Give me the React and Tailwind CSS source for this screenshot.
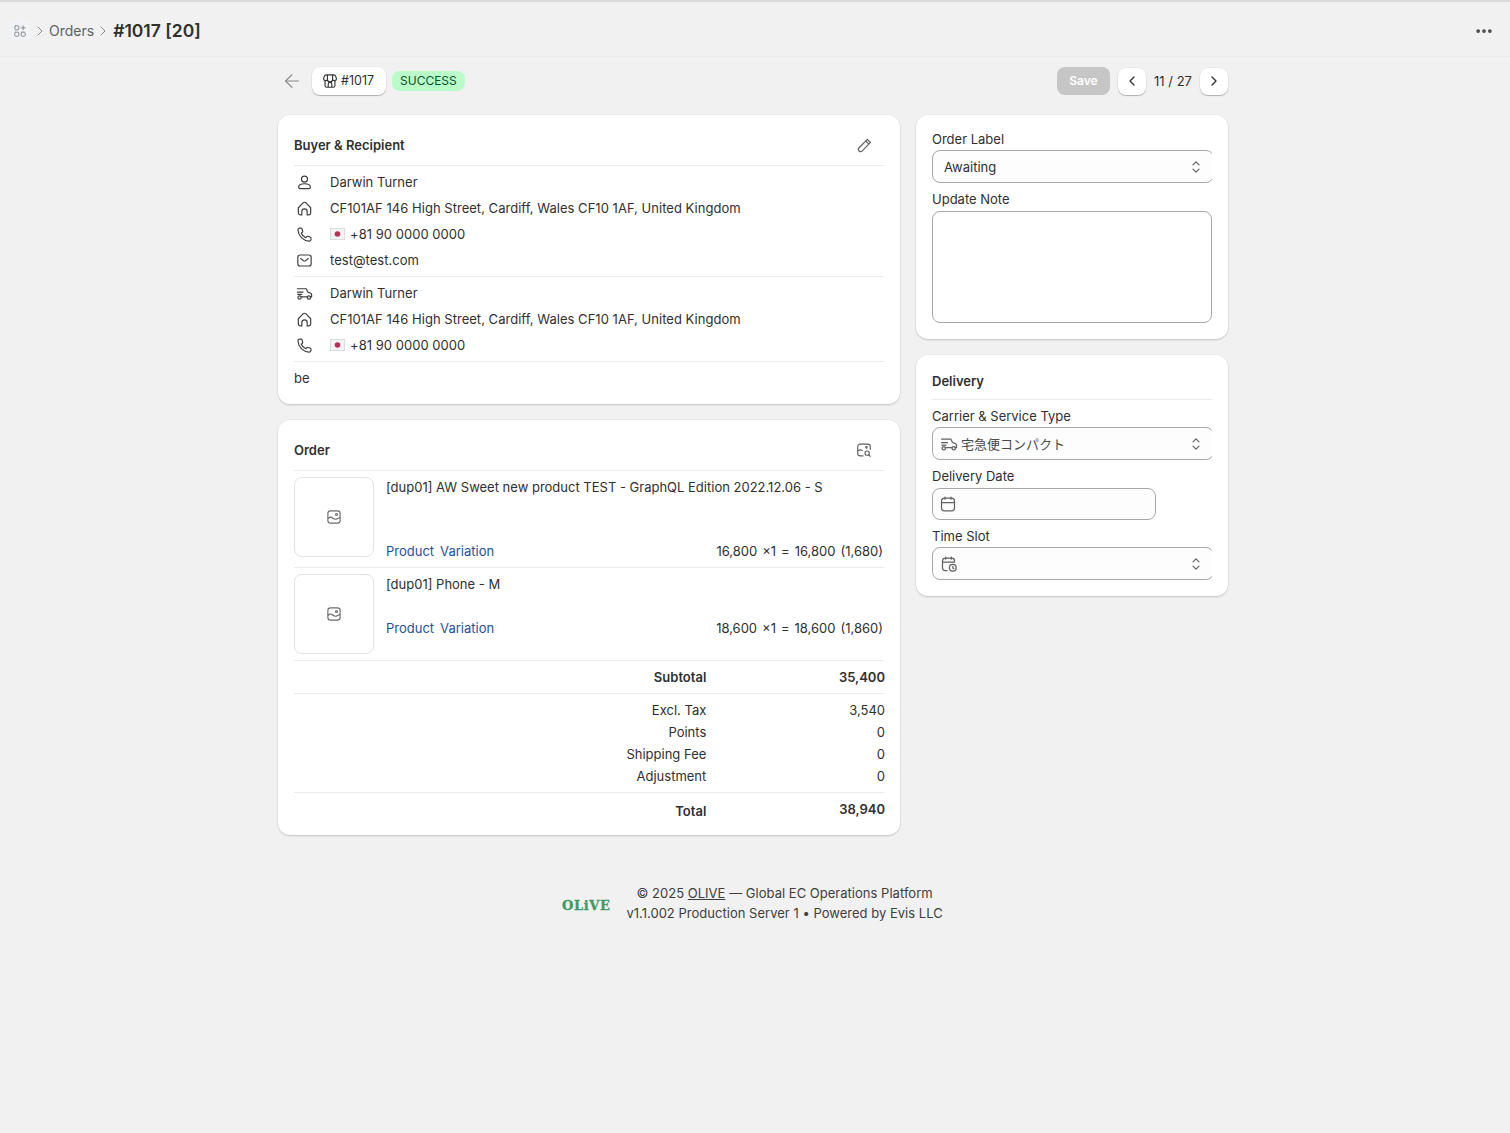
import React from 'react';
import { ChevronRight, ChevronLeft, ArrowLeft, MoreHorizontal } from 'lucide-react';

const Ico = ({ children, size = 19, className = '' }) => (
  <svg width={size} height={size} viewBox="0 0 20 20" fill="none" stroke="currentColor" strokeWidth="1.25" strokeLinecap="round" strokeLinejoin="round" className={`shrink-0 ${className}`}>
    {children}
  </svg>
);

const PersonIcon = (p) => (
  <Ico {...p}><circle cx="10" cy="6.400" r="3.200" /><path d="M3.800 14.800c0-2.300 2.400-3.500 6.200-3.500s6.200 1.200 6.200 3.500c0 1-.8 1.700-1.800 1.700H5.600c-1 0-1.800-.7-1.800-1.700Z" /></Ico>
);
const HomeIcon = (p) => (
  <Ico {...p}><path d="M3.500 9.200 8.400 4.100a2.200 2.200 0 0 1 3.200 0l4.900 5.100v5.300a2.300 2.300 0 0 1-2.300 2.300h-1.400v-3.600a2.800 2.800 0 0 0-5.600 0v3.600H5.800a2.300 2.300 0 0 1-2.300-2.300Z" /></Ico>
);
const PhoneIcon = (p) => (
  <Ico {...p}><path d="M5 3.200h1.400c.5 0 .9.3 1 .8l.7 2.600c.1.400 0 .8-.3 1L6.600 8.700a9 9 0 0 0 4.700 4.700l1.100-1.200c.3-.3.7-.4 1-.3l2.600.7c.5.100.8.500.8 1V15a1.900 1.900 0 0 1-2 1.900C8.500 16.500 3.500 11.500 3.100 5.200A1.900 1.900 0 0 1 5 3.200Z" /></Ico>
);
const MailIcon = (p) => (
  <Ico {...p}><rect x="3" y="4.200" width="14" height="11.600" rx="2.400" /><path d="m6 8 3 2.200c.6.400 1.400.400 2 0L14 8" /></Ico>
);
const DeliveryIcon = (p) => (
  <Ico {...p}><path d="M2.500 5h9.300l1.700 3.500 3 1.200c.6.300 1 .9 1 1.500v2.300h-1.500M6.500 13.500h6.500M2.500 8.500h6M3 11h4" /><circle cx="4.800" cy="14.200" r="1.700" /><circle cx="14.700" cy="14.200" r="1.700" /></Ico>
);
const ImageIcon = (p) => (
  <Ico {...p}><rect x="3.200" y="3.200" width="13.600" height="13.600" rx="3" /><circle cx="12.800" cy="7.200" r="1.100" /><path d="M3.500 11.500c1.700-1.700 3.300-1.900 5-.4s3.300 1.800 5 .9l3-1.500" /></Ico>
);
const ImageSearchIcon = (p) => (
  <Ico {...p}><path d="M9 16.500H6a3 3 0 0 1-3-3v-7a3 3 0 0 1 3-3h8a3 3 0 0 1 3 3v3" /><circle cx="12.700" cy="7" r=".9" /><path d="M3.300 11c1.600-1.500 3-1.600 4.700-.4" /><circle cx="13.500" cy="13.500" r="2.400" /><path d="m15.300 15.300 1.700 1.700" /></Ico>
);
const CalendarIcon = (p) => (
  <Ico {...p}><rect x="3.500" y="4.200" width="13" height="12.600" rx="3" /><path d="M3.500 8.500h13M7 3v2.200M13 3v2.200" /></Ico>
);
const CalendarTimeIcon = (p) => (
  <Ico {...p}><path d="M8 16.500H6.300a2.800 2.800 0 0 1-2.800-2.800V7a2.800 2.800 0 0 1 2.800-2.800h6.400A2.800 2.800 0 0 1 15.500 7v1M3.500 8h12M6.700 3v2.200M12.300 3v2.200" /><circle cx="13.800" cy="13.800" r="3.400" /><path d="M13.800 12.300v1.700l1 .7" /></Ico>
);
const EditIcon = (p) => (
  <Ico {...p}><path d="m13 3.500 3.300 3.300-8.600 8.900a2.300 2.300 0 0 1-3.400-3.300ZM11.300 5.300l3.300 3.300" /></Ico>
);
const StoreIcon = (p) => (
  <Ico {...p}><path d="M4.500 9.500V15a2 2 0 0 0 2 2h7a2 2 0 0 0 2-2V9.500M8 17v-3.500a2 2 0 0 1 4 0V17" /><path d="M6 3.200h8a2.500 2.500 0 0 1 2.400 1.900l.8 2.200a2.200 2.200 0 0 1-4.300.8 2.900 2.900 0 0 1-5.800 0 2.200 2.200 0 0 1-4.300-.8l.8-2.200A2.500 2.500 0 0 1 6 3.200ZM7.100 3.500l0 4.600M12.900 3.500v4.600" /></Ico>
);
const AppsIcon = (p) => (
  <Ico {...p}><rect x="3.500" y="3.500" width="5" height="5" rx="1" /><rect x="3.500" y="11.500" width="5" height="5" rx="1" /><rect x="11.500" y="11.500" width="5" height="5" rx="1" /><path d="M14 3.500v5M11.500 6h5" /></Ico>
);
const UpDownIcon = ({ size = 16 }) => (
  <svg width={size} height={size} viewBox="0 0 16 16" fill="none" stroke="currentColor" strokeWidth="1.200" strokeLinecap="round" strokeLinejoin="round" className="shrink-0 text-[#616161]">
    <path d="m5 5.800 3-3 3 3M5 10.200l3 3 3-3" />
  </svg>
);
const JpFlag = () => (
  <svg width="15" height="12" viewBox="0 0 15 12" className="shrink-0">
    <rect x="0.500" y="0.500" width="14" height="11" fill="#f4f4f4" stroke="#dcdcdc" strokeWidth="1" />
    <circle cx="7.500" cy="6" r="2.800" fill="#bc2f55" />
  </svg>
);

const Card = ({ children, className = '' }) => (
  <div className={`bg-white rounded-xl shadow-[0_1px_2px_rgba(0,0,0,0.18),0_0_0_0.5px_rgba(0,0,0,0.04)] ${className}`}>{children}</div>
);

const CardHead = ({ title, icon }) => (
  <div className="h-[36px] flex items-start justify-between border-b border-[#ebebeb]">
    <h3 className="mt-[5px] font-semibold">{title}</h3>
    <span className="mr-[9px] mt-[4px] w-[22px] h-[22px] flex items-center justify-center text-[#616161]">{icon}</span>
  </div>
);

const InfoRow = ({ icon, children }) => (
  <div className="h-[26px] flex items-center">
    <span className="w-[36px] pl-[1px] text-[#3f3f3f]">{icon}</span>
    <span className="flex items-center gap-[5px] tracking-[0.03px]">{children}</span>
  </div>
);

const Label = ({ children }) => <div className="h-[20px]">{children}</div>;

const SelectBox = ({ icon, text }) => (
  <div className="overflow-hidden mt-[1px]">
    <div className="w-[282px] h-[33px] border border-[#a8a8a8] rounded-lg bg-[#fdfdfd] flex items-center">
      <div className="flex items-center flex-1 pl-[6px] gap-[2px]">
        {icon}
        {text}
      </div>
      <span className="mr-[9px]"><UpDownIcon /></span>
    </div>
  </div>
);

const OrderItem = ({ name, qty, gap }) => (
  <div className="flex gap-[12px] py-[6px] border-b border-[#ebebeb]">
    <div className="w-[80px] h-[80px] shrink-0 border border-[#e3e3e3] rounded-lg flex items-center justify-center text-[#6b6b6b]">
      <ImageIcon size={18} />
    </div>
    <div className="flex-1 flex flex-col min-w-0">
      <div>{name}</div>
      <div className={`flex justify-between ${gap} pr-[1px]`}>
        <span className="text-[#1f5199] flex gap-[6px]"><span>Product</span><span>Variation</span></span>
        <span className="flex gap-[5px]">{qty.map((q, i) => <span key={i}>{q}</span>)}</span>
      </div>
    </div>
  </div>
);

const TotalRow = ({ label, value, bold, valueClass = '', className = '' }) => (
  <div className={`flex items-center justify-end ${className} ${bold ? 'font-semibold' : ''}`}>
    <span className="w-[413px] text-right">{label}</span>
    <span className={`w-[179px] text-right -mr-[1px] ${valueClass}`}>{value}</span>
  </div>
);

const navBtn = 'w-[28px] h-[27px] bg-white rounded-lg shadow-[0_1px_1px_rgba(0,0,0,0.25),0_0_0_0.5px_rgba(0,0,0,0.06)] flex items-center justify-center';

export default function App() {
  return (
    <div className="min-h-screen bg-[#f1f1f1] text-[13px] leading-[20px] text-[#303030] font-['Inter','Noto_Sans_CJK_JP',sans-serif]">
      <header className="h-[57px] border-b border-[#ebebeb] border-t-2 border-t-[#d9d9d9] flex items-center pt-[3px] pl-[10px] pr-[16px]">
        <div className="w-[20px] h-[20px] rounded bg-[#f1f3f7] flex items-center justify-center text-[#8a8f96]">
          <AppsIcon size={16} />
        </div>
        <ChevronRight size={16} strokeWidth={1.500} className="ml-[2px] text-[#8a8a8a]" />
        <span className="ml-[1px] text-[14px] text-[#616161]">Orders</span>
        <ChevronRight size={16} strokeWidth={1.500} className="ml-[1px] text-[#8a8a8a]" />
        <span className="ml-[2px] text-[17.500px] font-semibold">#1017 [20]</span>
        <MoreHorizontal size={20} strokeWidth={2.500} className="ml-auto text-[#4a4a4a]" />
      </header>

      <main className="w-[950px] ml-[278px]">
        <div className="h-[28px] mt-[10px] mb-[20px] flex items-center">
          <ArrowLeft size={22} strokeWidth={1.300} className="ml-[3px] text-[#8a8a8a]" />
          <div className="ml-[9px] h-[28px] w-[74px] bg-white rounded-lg shadow-[0_1px_1px_rgba(0,0,0,0.25),0_0_0_0.5px_rgba(0,0,0,0.06)] flex items-center pl-[9px] gap-[2px] text-[12.500px]">
            <StoreIcon size={18} />
            #1017
          </div>
          <span className="ml-[6px] h-[20px] px-[8px] rounded-lg bg-[#b9fbc9] text-[#0c5132] text-[12px]">SUCCESS</span>
          <div className="ml-auto h-[28px] w-[53px] rounded-lg bg-[#c6c6c6] text-white text-[12px] font-semibold flex items-center justify-center">Save</div>
          <div className={`ml-[8px] ${navBtn}`}>
            <ChevronLeft size={16} strokeWidth={2} />
          </div>
          <span className="w-[54px] text-center">11 / 27</span>
          <div className={navBtn}>
            <ChevronRight size={16} strokeWidth={2} />
          </div>
        </div>

        <div className="flex gap-[16px] items-start">
          <div className="w-[622px] flex flex-col gap-[16px]">
            <Card className="px-[16px] pt-[15px] pb-[16px]">
              <CardHead title="Buyer & Recipient" icon={<EditIcon />} />
              <div className="py-[3px] border-b border-[#ebebeb]">
                <InfoRow icon={<PersonIcon />}>Darwin Turner</InfoRow>
                <InfoRow icon={<HomeIcon />}>CF101AF 146 High Street, Cardiff, Wales CF10 1AF, United Kingdom</InfoRow>
                <InfoRow icon={<PhoneIcon />}><JpFlag />+81 90 0000 0000</InfoRow>
                <InfoRow icon={<MailIcon />}>test@test.com</InfoRow>
              </div>
              <div className="py-[3px] border-b border-[#ebebeb]">
                <InfoRow icon={<DeliveryIcon />}>Darwin Turner</InfoRow>
                <InfoRow icon={<HomeIcon />}>CF101AF 146 High Street, Cardiff, Wales CF10 1AF, United Kingdom</InfoRow>
                <InfoRow icon={<PhoneIcon />}><JpFlag />+81 90 0000 0000</InfoRow>
              </div>
              <div className="pt-[6px]">be</div>
            </Card>

            <Card className="px-[16px] pt-[15px] pb-[6px]">
              <CardHead title="Order" icon={<ImageSearchIcon size={18} />} />
              <OrderItem name="[dup01] AW Sweet new product TEST - GraphQL Edition 2022.12.06 - S" qty={['16,800', '×1', '=', '16,800', '(1,680)']} gap="mt-[44px]" />
              <OrderItem name="[dup01] Phone - M" qty={['18,600', '×1', '=', '18,600', '(1,860)']} gap="mt-[24px]" />
              <TotalRow bold label="Subtotal" value="35,400" className="h-[33px] border-b border-[#ebebeb]" />
              <div className="py-[5px] border-b border-[#ebebeb]">
                <TotalRow label="Excl. Tax" value="3,540" className="h-[22px]" />
                <TotalRow label="Points" value="0" className="h-[22px]" />
                <TotalRow label="Shipping Fee" value="0" className="h-[22px]" />
                <TotalRow label="Adjustment" value="0" className="h-[22px]" />
              </div>
              <TotalRow bold label="Total" value="38,940" valueClass="mb-[4px]" className="h-[36px]" />
            </Card>
          </div>

          <div className="w-[312px] flex flex-col gap-[16px]">
            <Card className="px-[16px] pt-[14px] pb-[16px]">
              <Label>Order Label</Label>
              <SelectBox text={<span className="ml-[5px]">Awaiting</span>} />
              <div className="mt-[6px]"><Label>Update Note</Label></div>
              <div className="mt-[2px] h-[112px] border border-[#a8a8a8] rounded-lg bg-white" />
            </Card>
            <Card className="px-[16px] pt-[15px] pb-[16px]">
              <div className="h-[30px] border-b border-[#ebebeb] font-semibold pt-[1px]">Delivery</div>
              <div className="mt-[6px]"><Label>Carrier & Service Type</Label></div>
              <SelectBox icon={<DeliveryIcon size={20} className="text-[#616161]" />} text={<span className="text-[#4a4a4a]">宅急便コンパクト</span>} />
              <div className="mt-[6px]"><Label>Delivery Date</Label></div>
              <div className="mt-[2px] w-[224px] h-[32px] border border-[#a8a8a8] rounded-lg bg-[#fdfdfd] flex items-center pl-[5px] text-[#616161]">
                <CalendarIcon size={20} />
              </div>
              <div className="mt-[6px]"><Label>Time Slot</Label></div>
              <SelectBox icon={<CalendarTimeIcon size={20} className="text-[#616161]" />} text="" />
            </Card>
          </div>
        </div>

        <footer className="mt-[48px] ml-[284px] flex items-center gap-[16px]">
          <span className="font-['DejaVu_Serif',serif] font-bold text-[13px] tracking-[0.6px] text-[#3e9a63] [-webkit-text-stroke:0.3px_#3e9a63] mt-[6px]">OLiVE</span>
          <div className="text-center text-[#404040] tracking-[0.02px]">
            <div>© 2025 <span className="underline">OLIVE</span> — Global EC Operations Platform</div>
            <div>v1.1.002 Production Server 1 • Powered by Evis LLC</div>
          </div>
        </footer>
      </main>
    </div>
  );
}
